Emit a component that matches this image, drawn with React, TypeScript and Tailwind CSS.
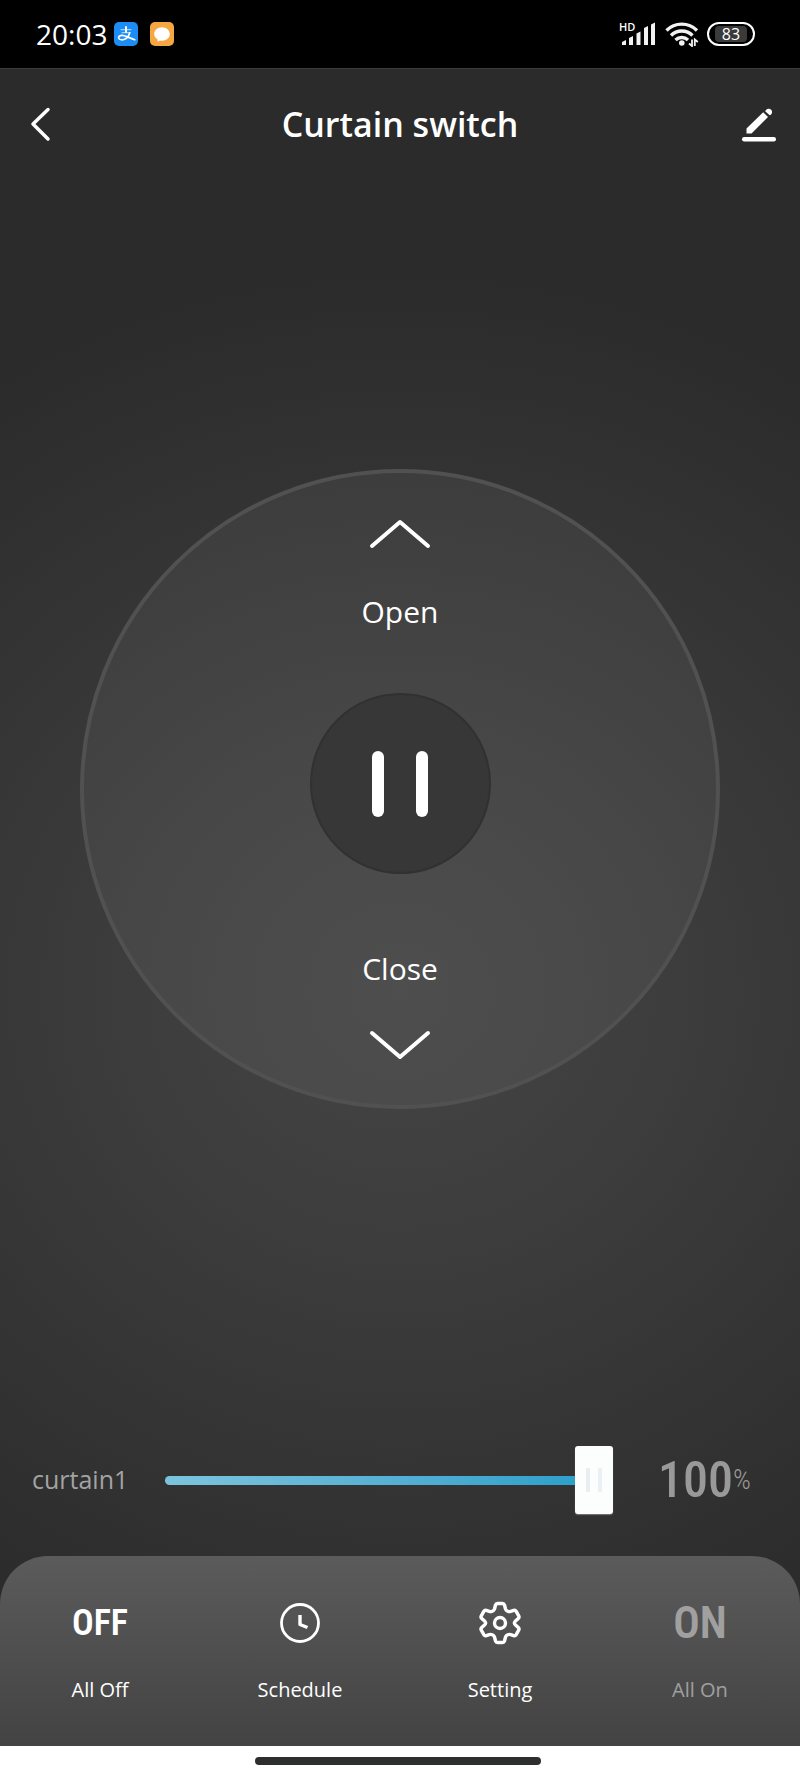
import { useState } from 'react'
import type { ReactNode } from 'react'

const AlipayIcon = () => (
  <svg viewBox="0 0 24 24" className="w-6 h-6" aria-hidden="true">
    <rect width="24" height="24" rx="5" fill="#1b8df5" />
    <g fill="none" stroke="#fff" strokeLinecap="round">
      <path d="M12 5v5" strokeWidth="2" />
      <path d="M7 7.6h10M8 10.6h8" strokeWidth="1.2" opacity="0.6" />
      <path
        d="M15.8 10.8c-1.2 3.6-3.6 7-7.6 7-2.4 0-3.6-1-3.6-2.2 0-1.4 1.5-2.3 3.4-2.2 4.2.2 7.6 2.8 12.8 4.4"
        strokeWidth="1.7"
      />
    </g>
  </svg>
)

const MessageIcon = () => (
  <svg viewBox="0 0 24 24" className="w-6 h-6" aria-hidden="true">
    <rect width="24" height="24" rx="5" fill="#f5a742" />
    <path
      d="M12 5.2c4.5 0 7.8 3 7.8 6.8s-3.3 6.7-7.8 6.7c-.8 0-1.6-.1-2.3-.3-.8.7-1.7 1.3-2.3 1.2.2-.7.3-1.4.2-2.2C5.4 16.2 4.2 14.3 4.2 12c0-3.8 3.3-6.8 7.8-6.8z"
      fill="#fff"
    />
  </svg>
)

const SignalIcon = () => (
  <div className="relative w-[38px] h-[26px]">
    <span className="absolute left-0 top-0 text-[11px] leading-3 font-semibold">
      HD
    </span>
    <svg viewBox="0 0 38 26" className="w-[38px] h-[26px]" aria-hidden="true">
      <g fill="#f2f2f2">
        <path d="M3 24v-3l4-2v5z" />
        <path d="M10 24v-7l4-2v9z" />
        <path d="M17.5 24V12.5l4-2V24z" />
        <path d="M25 24V7l4-2v19z" />
        <path d="M32 24V3.5l4-2V24z" />
      </g>
    </svg>
  </div>
)

const WifiIcon = () => (
  <svg viewBox="0 0 34 26" className="w-[34px] h-[26px]" aria-hidden="true">
    <g fill="none" stroke="#f2f2f2" strokeWidth="3.4">
      <path d="M1.5 9.5a21.5 21.5 0 0 1 30.5 0" />
      <path d="M6 14.5a15.2 15.2 0 0 1 21.5 0" />
      <path d="M10.5 19a9 9 0 0 1 12.5 0" />
    </g>
    <circle cx="16.8" cy="22" r="2.8" fill="#f2f2f2" />
    <g fill="none" stroke="#f2f2f2" strokeWidth="1.8">
      <path d="M27 18.5v6.5l-3-2.5" />
      <path d="M29.8 25v-6.5l3 2.5" />
    </g>
  </svg>
)

const StatusBar = () => (
  <div className="flex items-center justify-between h-[68px] pl-9 pr-[45px] bg-black">
    <div className="flex items-center">
      <span className="text-[28px] leading-8 w-[78px] whitespace-nowrap">
        20:03
      </span>
      <div className="flex gap-3">
        <AlipayIcon />
        <MessageIcon />
      </div>
    </div>
    <div className="flex items-center gap-2">
      <SignalIcon />
      <WifiIcon />
      <div className="flex items-center justify-center w-12 h-6 rounded-full border-2 border-white">
        <span className="w-8 bg-[#3a3a3a] rounded-sm text-center text-base leading-4">
          83
        </span>
      </div>
    </div>
  </div>
)

const Header = () => (
  <header className="flex items-center justify-between h-[110px] px-6 border-t border-[#3a3a3a]">
    <button type="button" aria-label="Back" className="w-9 h-9">
      <svg viewBox="0 0 36 36" fill="none" className="w-9 h-9">
        <path
          d="M24 3.5 9 18l15 15"
          stroke="#fff"
          strokeWidth="3.5"
          strokeLinecap="round"
          strokeLinejoin="round"
        />
      </svg>
    </button>
    <h1 className="text-[34px] leading-10 font-semibold">Curtain switch</h1>
    <button type="button" aria-label="Edit" className="w-9 h-9">
      <svg viewBox="0 0 36 36" className="w-9 h-9" fill="#fff">
        <path d="M6.5 22.5 23.2 6.200l4.800 4.800L11.500 27.500h-5z" />
        <path d="M25.500 4.800a3.400 3.400 0 1 1 4.200 4.500l-4.600-4.100z" />
        <rect x="2" y="31" width="34" height="4.500" rx="2.200" />
      </svg>
    </button>
  </header>
)

const Chevron = ({ down }: { down?: boolean }) => (
  <svg viewBox="0 0 64 32" fill="none" className="w-16 h-8" aria-hidden="true">
    <path
      d={down ? 'M4 4l28 24L60 4' : 'M4 28 32 4l28 24'}
      stroke="#fff"
      strokeWidth="4"
      strokeLinecap="round"
      strokeLinejoin="round"
    />
  </svg>
)

const Dial = () => (
  <div className="flex flex-col items-center w-[640px] h-[640px] pt-[45px] rounded-full border-4 border-[#515151] bg-white/5">
    <button type="button" className="flex flex-col items-center gap-[42px]">
      <Chevron />
      <span className="text-[30px] leading-10">Open</span>
    </button>
    <button
      type="button"
      aria-label="Pause"
      className="flex items-center justify-center gap-8 w-[181px] h-[181px] mt-[61px] rounded-full border-2 border-[#313131] bg-[#373737]"
    >
      <span className="w-3 h-[66px] rounded-full bg-white" />
      <span className="w-3 h-[66px] rounded-full bg-white" />
    </button>
    <button
      type="button"
      className="flex flex-col items-center gap-[40px] mt-[75px]"
    >
      <span className="text-[30px] leading-10">Close</span>
      <Chevron down />
    </button>
  </div>
)

const CurtainSlider = () => {
  const [value, setValue] = useState(100)
  return (
    <div className="flex items-center h-[156px] pt-1 pl-8 pr-[49px]">
      <label
        htmlFor="curtain1"
        className="w-[133px] text-[25px] text-[#a3a3a3]"
      >
        curtain1
      </label>
      <input
        id="curtain1"
        type="range"
        min={0}
        max={100}
        value={value}
        onChange={(e) => setValue(Number(e.target.value))}
        className="flex-1 min-w-0 h-[68px] appearance-none bg-transparent [&::-webkit-slider-runnable-track]:h-[9px] [&::-webkit-slider-runnable-track]:rounded-full [&::-webkit-slider-runnable-track]:bg-linear-to-r [&::-webkit-slider-runnable-track]:from-[#7cc4de] [&::-webkit-slider-runnable-track]:to-[#219dc9] [&::-webkit-slider-thumb]:appearance-none [&::-webkit-slider-thumb]:w-[38px] [&::-webkit-slider-thumb]:h-[68px] [&::-webkit-slider-thumb]:-mt-[30px] [&::-webkit-slider-thumb]:rounded-[3px] [&::-webkit-slider-thumb]:bg-[#fcfdfd] [&::-webkit-slider-thumb]:bg-[linear-gradient(90deg,#e9eef2_4px,transparent_4px,transparent_12px,#e9f1f6_12px)] [&::-webkit-slider-thumb]:bg-[length:16px_24px] [&::-webkit-slider-thumb]:bg-center [&::-webkit-slider-thumb]:bg-no-repeat [&::-webkit-slider-thumb]:shadow-[0_1px_1px_#777]"
      />
      <output
        htmlFor="curtain1"
        className="flex items-center justify-end w-[138px] font-['Roboto_Condensed','Roboto',sans-serif] text-[#999]"
      >
        <span className="text-[50px] leading-[50px] font-medium">{value}</span>
        <span className="text-[28px] leading-10 font-light">%</span>
      </output>
    </div>
  )
}

const NavItem = ({
  label,
  muted,
  children,
}: {
  label: string
  muted?: boolean
  children: ReactNode
}) => (
  <button
    type="button"
    className={`flex flex-col items-center gap-[33px] ${muted ? 'text-[#a0a0a0]' : 'text-white'}`}
  >
    <span className="flex items-center justify-center h-11 font-['Roboto_Condensed','Roboto',sans-serif] font-semibold">
      {children}
    </span>
    <span className="text-xl leading-6">{label}</span>
  </button>
)

const TabBar = () => (
  <nav className="grid grid-cols-4 pt-[45px] pb-11 rounded-t-[48px] bg-linear-to-b from-[#5b5b5b] to-[#434343]">
    <NavItem label="All Off">
      <span className="text-4xl leading-11">OFF</span>
    </NavItem>
    <NavItem label="Schedule">
      <svg
        viewBox="0 0 44 44"
        className="w-11 h-11"
        fill="none"
        stroke="currentColor"
        strokeLinejoin="round"
      >
        <circle cx="22" cy="22" r="18.5" strokeWidth="2.8" />
        <path d="M22 14v9.5l7.5 3" strokeWidth="3.4" />
      </svg>
    </NavItem>
    <NavItem label="Setting">
      <svg
        viewBox="0 0 44 44"
        className="w-11 h-11"
        fill="none"
        stroke="currentColor"
        strokeWidth="3.4"
        strokeLinejoin="round"
      >
        <path d="M17.5 4Q18 2.500 19.500 2.500h5Q26 2.500 26.500 4l1 4q.5 1.500 2.200 2.200 1.500.7 3 .2l3-1q1.600-.5 2.500 1l2.500 4.400q.8 1.500-.4 2.600l-2.800 2.600q-1.200 1.200-1.200 2t1.200 2l2.800 2.600q1.200 1.100.4 2.600l-2.500 4.400q-.9 1.500-2.500 1l-3-1q-1.500-.5-3 .2-1.700.7-2.200 2.200l-1 4Q26 41.500 24.500 41.500h-5Q18 41.500 17.500 40l-1-4q-.5-1.500-2.200-2.200-1.500-.7-3-.2l-3 1q-1.600.5-2.500-1l-2.500-4.400q-.8-1.500.4-2.600L6.500 24q1.200-1.200 1.200-2t-1.200-2l-2.800-2.600q-1.200-1.100-.4-2.600l2.500-4.400q.9-1.500 2.500-1l3 1q1.500.5 3-.2 1.700-.7 2.200-2.200z" />
        <circle cx="22" cy="22" r="5.500" />
      </svg>
    </NavItem>
    <NavItem label="All On" muted>
      <span className="text-[44px] leading-11">ON</span>
    </NavItem>
  </nav>
)

const App = () => (
  <div className="flex flex-col min-h-screen bg-black text-white font-['Open_Sans','Noto_Sans',sans-serif]">
    <StatusBar />
    <div className="flex flex-col flex-1 bg-[radial-gradient(ellipse_760px_720px_at_50%_55%,#454545,#3d3d3d_35%,#323232_75%,#2b2b2b)]">
      <Header />
      <main className="flex flex-col flex-1">
        <div className="flex flex-1 items-center justify-center">
          <Dial />
        </div>
        <CurtainSlider />
      </main>
      <TabBar />
    </div>
    <div className="flex justify-center h-8 pt-[11px] pr-1 bg-white">
      <div className="w-[286px] h-2 rounded-full bg-[#2d2f2e]" />
    </div>
  </div>
)

export default App
